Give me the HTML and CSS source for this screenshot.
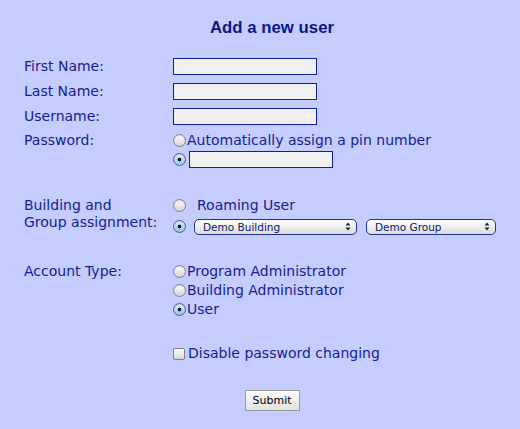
FILE: index.html
```html
<!DOCTYPE html>
<html>
<head>
<meta charset="utf-8">
<title>Add a new user</title>
<link rel="stylesheet" href="styles.css">
</head>
<body>
<div class="page">
  <h1 class="title">Add a new user</h1>
  <form class="form">
    <div class="row field"><label class="lbl">First Name:</label><input class="txt" type="text"></div>
    <div class="row field"><label class="lbl">Last Name:</label><input class="txt" type="text"></div>
    <div class="row field"><label class="lbl">Username:</label><input class="txt" type="text"></div>

    <div class="row pw">
      <span class="lbl">Password:</span>
      <div class="opts">
        <label class="opt"><input type="radio" class="radio" name="pw">Automatically assign a pin number</label>
        <label class="opt"><input type="radio" class="radio" name="pw" checked><input class="txt pin" type="text"></label>
      </div>
    </div>

    <div class="row bld">
      <span class="lbl two">Building and<br>Group assignment:</span>
      <div class="opts">
        <label class="opt tall"><input type="radio" class="radio" name="bg"><span class="roam">Roaming User</span></label>
        <div class="opt tall">
          <input type="radio" class="radio" name="bg" checked>
          <span class="sel wide"><select><option>Demo Building</option></select><svg width="6" height="9" viewBox="0 0 6 9"><path d="M0.5 3.6 L3 0.6 L5.5 3.6Z M0.5 5.4 L3 8.4 L5.5 5.4Z" fill="#1b1f4a"/></svg></span>
          <span class="sel narrow"><select><option>Demo Group</option></select><svg width="6" height="9" viewBox="0 0 6 9"><path d="M0.5 3.6 L3 0.6 L5.5 3.6Z M0.5 5.4 L3 8.4 L5.5 5.4Z" fill="#1b1f4a"/></svg></span>
        </div>
      </div>
    </div>

    <div class="row acct">
      <span class="lbl">Account Type:</span>
      <div class="opts">
        <label class="opt"><input type="radio" class="radio" name="at">Program Administrator</label>
        <label class="opt"><input type="radio" class="radio" name="at">Building Administrator</label>
        <label class="opt"><input type="radio" class="radio" name="at" checked>User</label>
      </div>
    </div>

    <div class="row chk">
      <span class="lbl"></span>
      <div class="opts">
        <label class="opt"><input type="checkbox" class="check">Disable password changing</label>
      </div>
    </div>

    <div class="actions"><button type="button" class="submit">Submit</button></div>
  </form>
</div>
</body>
</html>
```

FILE: styles.css
```css
html, body {
  margin: 0;
  padding: 0;
  background: #c5cdfe;
}

body {
  font-family: "DejaVu Sans", Verdana, sans-serif;
  font-size: 14px;
  color: #16218f;
}

.page {
  padding: 19px 0 0 24px;
}

.title {
  margin: 0;
  text-align: center;
  font-family: "Liberation Sans", Arial, sans-serif;
  font-weight: bold;
  font-size: 16.8px;
  line-height: 18px;
  height: 18px;
  color: #0c1886;
}

.form {
  margin: 17px 0 0 0;
}

.row {
  display: grid;
  grid-template-columns: 149px 1fr;
}

.field {
  height: 25px;
  align-items: center;
}

.lbl {
  line-height: 19px;
  white-space: nowrap;
}

.txt {
  width: 144px;
  height: 17px;
  box-sizing: border-box;
  border: 1px solid #0e1e9e;
  background: #f0f0f0;
  margin: 0;
  padding: 0 2px;
  font: 12px "DejaVu Sans", sans-serif;
}

.pw {
  margin-top: 2px;
}

.opts {
  display: flex;
  flex-direction: column;
}

.opt {
  display: flex;
  align-items: center;
  height: 19px;
  line-height: 19px;
  white-space: nowrap;
}

.opt.tall {
  height: 21px;
}

.pin {
  margin-left: 2px;
}

.radio {
  appearance: none;
  -webkit-appearance: none;
  width: 13px;
  height: 13px;
  margin: 0 1px 0 0;
  box-sizing: border-box;
  border-radius: 50%;
  border: 1px solid #80808c;
  background: linear-gradient(#fefefe, #d4d4d4);
  box-shadow: inset 0 1px 1px rgba(0, 0, 0, 0.12);
  flex: none;
}

.radio:checked {
  border-color: #4d6288;
  background: radial-gradient(circle at 50% 50%, #111 0 1.5px, transparent 2.2px), linear-gradient(#e4f1fd, #8fc1ec);
}

.check {
  appearance: none;
  -webkit-appearance: none;
  width: 12px;
  height: 12px;
  margin: 0 3px 0 0;
  box-sizing: border-box;
  border-radius: 2px;
  border: 1px solid #80808c;
  background: linear-gradient(#fefefe, #d6d6d6);
  flex: none;
}

.bld {
  margin-top: 26px;
}

.lbl.two {
  padding-top: 2px;
  line-height: 17px;
}

.roam {
  margin-left: 10px;
}

.sel {
  position: relative;
  display: inline-block;
  height: 16px;
}

.sel.wide {
  margin-left: 7px;
}

.sel.narrow {
  margin-left: 9px;
}

.sel select {
  appearance: none;
  -webkit-appearance: none;
  display: block;
  height: 16px;
  box-sizing: border-box;
  border: 1px solid #23308c;
  border-radius: 5px;
  background: linear-gradient(#ffffff, #ececec 55%, #dadada);
  font-family: "DejaVu Sans", sans-serif;
  font-size: 10.5px;
  line-height: 14px;
  color: #0d176c;
  padding: 0 0 0 8px;
  margin: 0;
}

.sel.wide select {
  width: 163px;
}

.sel.narrow select {
  width: 130px;
}

.sel svg {
  position: absolute;
  right: 6px;
  top: 3.5px;
  pointer-events: none;
}

.acct {
  margin-top: 25px;
}

.chk {
  margin-top: 25px;
}

.actions {
  display: flex;
  justify-content: center;
  margin-top: 27px;
}

.submit {
  width: 55px;
  height: 21px;
  box-sizing: border-box;
  border: 1px solid #9a9a9a;
  background: linear-gradient(#fbfbfb, #e2e2e2);
  font-family: "DejaVu Sans", sans-serif;
  font-size: 11px;
  color: #000;
  padding: 0;
  margin: 0;
}
```
